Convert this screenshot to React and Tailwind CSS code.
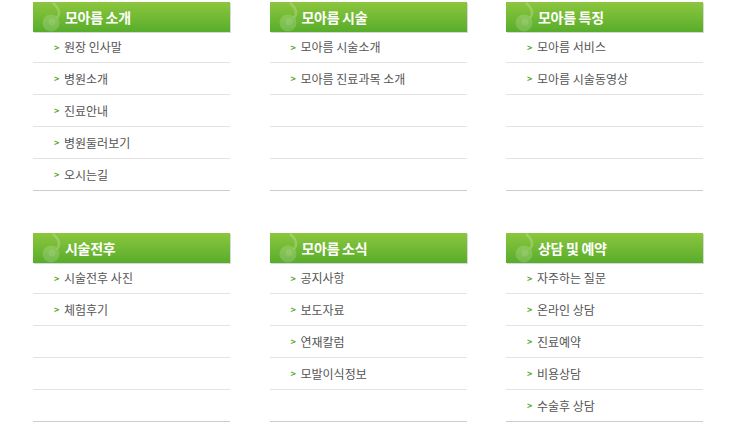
import React from "react";

const sections = [
  { title: "모아름 소개", items: ["원장 인사말", "병원소개", "진료안내", "병원둘러보기", "오시는길"] },
  { title: "모아름 시술", items: ["모아름 시술소개", "모아름 진료과목 소개", "", "", ""] },
  { title: "모아름 특징", items: ["모아름 서비스", "모아름 시술동영상", "", "", ""] },
  { title: "시술전후", items: ["시술전후 사진", "체험후기", "", "", ""] },
  { title: "모아름 소식", items: ["공지사항", "보도자료", "연재칼럼", "모발이식정보", ""] },
  { title: "상담 및 예약", items: ["자주하는 질문", "온라인 상담", "진료예약", "비용상담", "수술후 상담"] },
];

function Drop() {
  return (
    <svg width="28" height="30" viewBox="0 0 28 30" className="absolute left-[5px] top-0" fill="none">
      <path d="M15 1 C 21 6, 23 11, 19 16" stroke="white" strokeOpacity="0.2" strokeWidth="2.5" />
      <circle cx="13" cy="21" r="8.5" fill="white" fillOpacity="0.17" />
      <circle cx="14" cy="20" r="3.5" fill="white" fillOpacity="0.1" />
    </svg>
  );
}

function Box({ title, items }) {
  return (
    <div className="w-[197px]">
      <div className="relative h-[30px] bg-gradient-to-b from-[#8cc63e] to-[#57ad2b] shadow-[1px_1px_0_#d8d8d8] flex items-center">
        <Drop />
        <span className="pl-[32px] text-white font-bold text-[14px] tracking-[-0.3px]">{title}</span>
      </div>
      <div>
        {items.map((it, i) => (
          <div
            key={i}
            className={`${i === 0 ? "h-[31px]" : "h-[32px]"} flex items-center border-b ${i === items.length - 1 ? "border-[#cccccc]" : "border-[#e3e3e3]"}`}
          >
            {it && (
              <>
                <span className="ml-[21px] w-[10px] text-[#5aa82a] text-[9px] font-bold leading-none">&gt;</span>
                <span className="text-[12px] text-[#555555]">{it}</span>
              </>
            )}
          </div>
        ))}
      </div>
    </div>
  );
}

export default function App() {
  return (
    <div
      className="w-[750px] h-[433px] bg-white pl-[33px] pt-[2px]"
      style={{ fontFamily: '"Noto Sans CJK KR", "Noto Sans", sans-serif' }}
    >
      <div className="grid grid-cols-[197px_197px_197px] gap-x-[39.5px] gap-y-[42px]">
        {sections.map((s, i) => (
          <Box key={i} {...s} />
        ))}
      </div>
    </div>
  );
}
